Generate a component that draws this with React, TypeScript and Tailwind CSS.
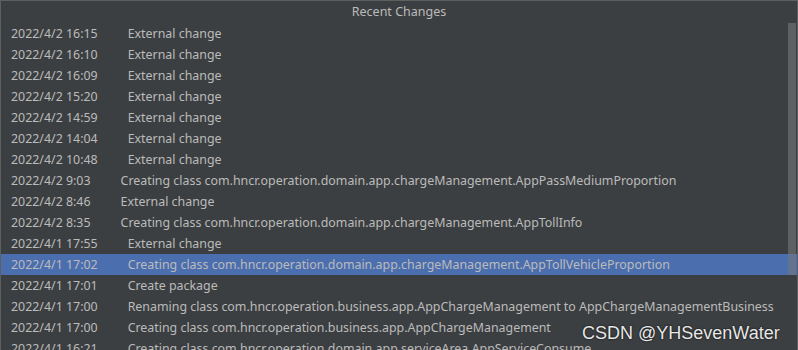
import React from "react";

const rows: [string, string][] = [
  ["2022/4/2 16:15", "External change"],
  ["2022/4/2 16:10", "External change"],
  ["2022/4/2 16:09", "External change"],
  ["2022/4/2 15:20", "External change"],
  ["2022/4/2 14:59", "External change"],
  ["2022/4/2 14:04", "External change"],
  ["2022/4/2 10:48", "External change"],
  ["2022/4/2 9:03", "Creating class com.hncr.operation.domain.app.chargeManagement.AppPassMediumProportion"],
  ["2022/4/2 8:46", "External change"],
  ["2022/4/2 8:35", "Creating class com.hncr.operation.domain.app.chargeManagement.AppTollInfo"],
  ["2022/4/1 17:55", "External change"],
  ["2022/4/1 17:02", "Creating class com.hncr.operation.domain.app.chargeManagement.AppTollVehicleProportion"],
  ["2022/4/1 17:01", "Create package"],
  ["2022/4/1 17:00", "Renaming class com.hncr.operation.business.app.AppChargeManagement to AppChargeManagementBusiness"],
  ["2022/4/1 17:00", "Creating class com.hncr.operation.business.app.AppChargeManagement"],
  ["2022/4/1 16:21", "Creating class com.hncr.operation.domain.app.serviceArea.AppServiceConsume"],
];

const SELECTED = 11;

export default function App() {
  return (
    <div
      className="relative w-[798px] h-[350px] overflow-hidden bg-[#3c3f41] border-t border-x border-[#5e6060] text-[#bbbbbb] text-[12.4px]"
      style={{ fontFamily: '"Noto Sans", "Open Sans", sans-serif' }}
    >
      <div className="h-[22px] flex items-center justify-center text-[12.5px]">Recent Changes</div>
      <div className="flex flex-col overflow-hidden">
        {rows.map(([date, desc], i) => (
          <div
            key={i}
            className={`h-[21px] shrink-0 flex items-center pl-[10px] pt-[2px] whitespace-nowrap ${
              i === SELECTED ? "bg-[#4b6eaf]" : ""
            }`}
          >
            <span>{date}</span>
            <span className="ml-[30px]">{desc}</span>
          </div>
        ))}
      </div>
      {/* scrollbar thumb */}
      <div className="absolute z-10 left-[787px] top-[22px] w-[8px] h-[252px] bg-[#75787b] opacity-60" />
      <div
        className="absolute z-20 left-[581px] top-[319px] text-[18px] text-[#e8e8e8] [text-shadow:0_0_2px_#000]"
        style={{ fontFamily: '"Liberation Sans", Arial, sans-serif' }}
      >
        CSDN @YHSevenWater
      </div>
    </div>
  );
}
